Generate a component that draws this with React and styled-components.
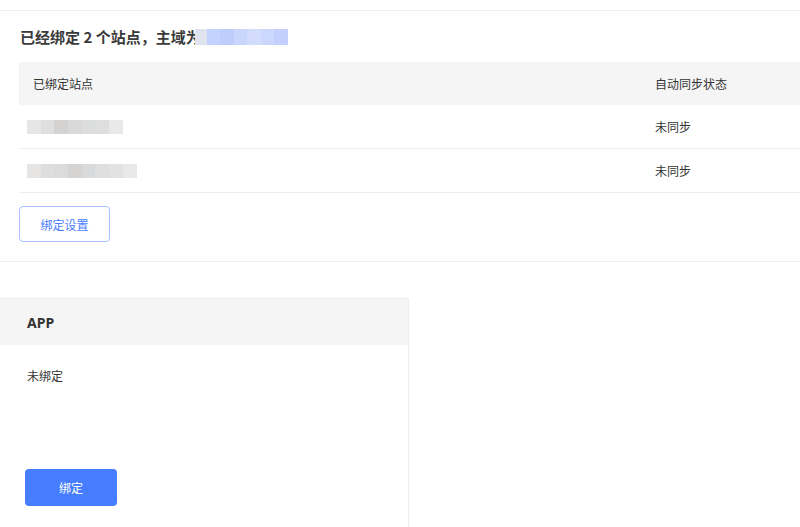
import styled, { createGlobalStyle } from "styled-components"

const Global = createGlobalStyle`
  html, body {
    margin: 0;
    padding: 0;
    background: #fff;
    font-family: "Noto Sans CJK SC", "Noto Sans", sans-serif;
    color: #333;
    overflow: hidden;
  }
`

const Page = styled.div`
  width: 800px;
  height: 527px;
  overflow: hidden;
  padding-top: 10px;
  box-sizing: border-box;
`

const Section = styled.section`
  border-top: 1px solid #eeeeee;
  border-bottom: 1px solid #eeeeee;
  padding: 16px 0 19px 19px;
`

const Title = styled.h2`
  margin: 0 0 15px 1px;
  font-size: 15px;
  line-height: 20px;
  font-weight: 700;
  color: #3a3a3a;
  display: flex;
  align-items: center;
`

// pixelated (masked) text
const Mosaic = styled.span`
  display: inline-flex;
  margin-left: ${(p) => p.$offset || 0}px;
`

const Pixel = styled.span`
  width: ${(p) => p.$w || 14}px;
  height: ${(p) => p.$h || 14}px;
  background: ${(p) => p.$c};
`

const Table = styled.div`
  width: 781px;
  font-size: 12px;
`

const Row = styled.div`
  display: grid;
  grid-template-columns: 622px 1fr;
  align-items: center;
  height: 43px;
  background: ${(p) => (p.$head ? "#f5f5f5" : "#fff")};
  border-bottom: ${(p) => (p.$head ? "none" : "1px solid #eeeeee")};
  color: #333;
`

const Cell = styled.div`
  padding-left: 14px;
  display: flex;
  align-items: center;
`

const OutlineButton = styled.button`
  margin-top: 13px;
  width: 91px;
  height: 36px;
  border: 1px solid #a9c2ff;
  border-radius: 4px;
  background: #fff;
  color: #4a7dff;
  font-family: inherit;
  font-size: 12px;
  cursor: pointer;
`

const Card = styled.div`
  margin-top: 36px;
  width: 408px;
  border-right: 1px solid #eeeeee;
  border-top: 1px solid #eeeeee;
`

const CardHead = styled.div`
  height: 46px;
  background: #f5f5f5;
  display: flex;
  align-items: center;
  padding-left: 27px;
  font-family: "Noto Sans", "Noto Sans CJK SC", sans-serif;
  font-size: 14px;
  font-weight: 700;
  color: #333;
`

const CardBody = styled.div`
  padding: 22px 25px 40px 27px;
  font-size: 12px;
  color: #333;
`

const PrimaryButton = styled.button`
  display: block;
  margin: 85px 0 0 -2px;
  width: 92px;
  height: 37px;
  border: none;
  border-radius: 4px;
  background: #477eff;
  color: #fff;
  font-family: inherit;
  font-size: 12px;
  cursor: pointer;
`

const titleMask = ["#dfe3ee", "#c4d2ff", "#bfcdfd", "#c8d5fd", "#d3dcfd", "#ccd7fd", "#c3d0fd"]
const rowMask1 = ["#e6e6e6", "#dfdfdf", "#d5d3d2", "#d9d9d9", "#dcdddd", "#dedede", "#e9e9e9"]
const rowMask2 = ["#e6e5e4", "#dedede", "#dbdbdb", "#d6d4d3", "#d9dadb", "#dfdfdf", "#e3e2e2", "#e9e9e9"]

const sites = [rowMask1, rowMask2]

export default function App() {
  return (
    <Page>
      <Global />
      <Section>
        <Title>
          已经绑定 2 个站点，主域为
          <Mosaic $offset={-6}>
            {titleMask.map((c, i) => (
              <Pixel key={i} $c={c} $w={i === 0 ? 12 : 13.5} $h={16} />
            ))}
          </Mosaic>
        </Title>
        <Table>
          <Row $head>
            <Cell>已绑定站点</Cell>
            <Cell>自动同步状态</Cell>
          </Row>
          {sites.map((mask, r) => (
            <Row key={r}>
              <Cell>
                <Mosaic $offset={-6}>
                  {mask.map((c, i) => (
                    <Pixel key={i} $c={c} $w={13.7} $h={14} />
                  ))}
                </Mosaic>
              </Cell>
              <Cell>未同步</Cell>
            </Row>
          ))}
        </Table>
        <OutlineButton>绑定设置</OutlineButton>
      </Section>
      <Card>
        <CardHead>APP</CardHead>
        <CardBody>
          未绑定
          <PrimaryButton>绑定</PrimaryButton>
        </CardBody>
      </Card>
    </Page>
  )
}
